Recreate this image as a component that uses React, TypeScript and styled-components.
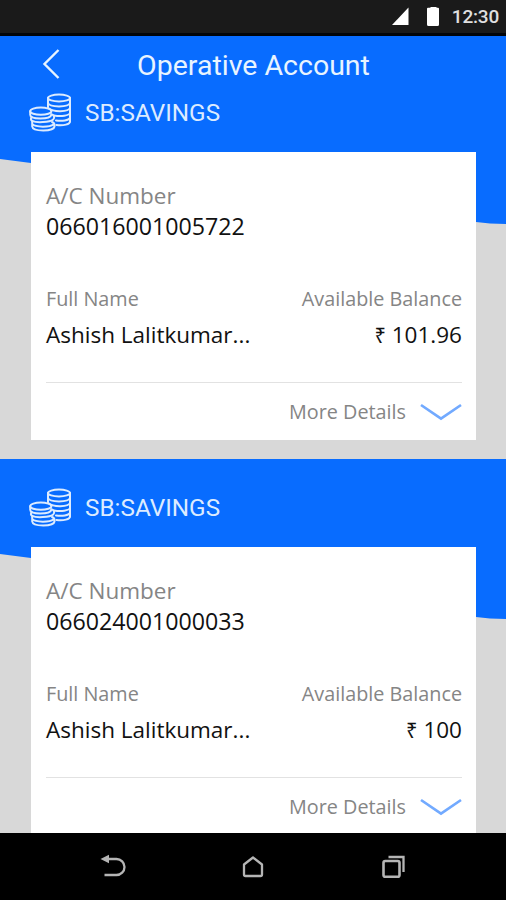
import React from "react";
import styled, { createGlobalStyle } from "styled-components";

const GlobalStyle = createGlobalStyle`
  * { box-sizing: border-box; }
  body { margin: 0; background: #000; }
`;

const Phone = styled.div`
  width: 506px;
  height: 900px;
  display: flex;
  flex-direction: column;
  overflow: hidden;
  background: #d8d8d8;
  font-family: "Open Sans", "Noto Sans", sans-serif;
`;

const StatusBar = styled.div`
  flex: none;
  height: 36px;
  display: flex;
  justify-content: flex-end;
  padding-right: 7px;
  background: #1a1a1a;
  border-bottom: 3px solid #020509;
`;

const StatusIcons = styled.svg`
  width: 54px;
  height: 33px;
  margin-right: 6px;
`;

const Clock = styled.span`
  color: #e0e0e0;
  font: 500 19px/33px Roboto, sans-serif;
  letter-spacing: -0.2px;
`;

const Content = styled.main`
  flex: 1;
  min-height: 0;
  overflow: hidden;
`;

const Account = styled.section<{ $gap: number; $left: number; $right: number }>`
  padding: 0 30px 0 31px;
  margin-bottom: ${(p) => p.$gap}px;
  background: #d8d8d8;
  position: relative;
  isolation: isolate;

  &::before {
    content: "";
    position: absolute;
    inset: 0;
    z-index: -1;
    background: #086cff;
    clip-path: polygon(
      0 0,
      100% 0,
      100% ${(p) => p.$right + 2}px,
      490px ${(p) => p.$right + 1.4}px,
      476px ${(p) => p.$right}px,
      31px ${(p) => p.$left + 4}px,
      0 ${(p) => p.$left}px
    );
  }
`;

const TitleBar = styled.header`
  height: 58px;
  display: grid;
  grid-template-columns: 44px 1fr 44px;
  color: #e8f4ff;
`;

const BackIcon = styled.svg`
  width: 32px;
  height: 44px;
  margin-top: 6px;
`;

const Title = styled.h1`
  margin: 0;
  text-align: center;
  font: 400 28.5px/60px Roboto, sans-serif;
  white-space: nowrap;
`;

const AccountHeading = styled.div<{ $top: number }>`
  display: flex;
  height: ${(p) => p.$top + 58}px;
  padding-top: ${(p) => p.$top}px;
  color: #dcebff;
`;

const Coins = styled.svg`
  width: 42px;
  height: 40px;
  margin: -1px 14px 0 -2px;
`;

const AccountType = styled.h2`
  margin: 0;
  font: 400 24.3px/38px Roboto, sans-serif;
`;

const Card = styled.article`
  height: 288px;
  padding: 30px 14px 0 15px;
  background: #fff;
`;

const Label = styled.div<{ $large?: boolean }>`
  color: #858585;
  font-size: ${(p) => (p.$large ? 22.5 : 19.8)}px;
  line-height: 28px;
  white-space: nowrap;
`;

const Value = styled.div<{ $large?: boolean }>`
  color: #111;
  font-size: ${(p) => (p.$large ? 23.2 : 22.5)}px;
  line-height: 32px;
  white-space: nowrap;
`;

const Rupee = styled.span`
  font-size: 20px;
`;

const Columns = styled.div`
  display: flex;
  justify-content: space-between;
  height: 98px;
  margin-top: 43px;
  border-bottom: 1px solid #e2e2e2;
`;

const Column = styled.div<{ $end?: boolean }>`
  display: flex;
  flex-direction: column;
  gap: 6px;
  text-align: ${(p) => (p.$end ? "right" : "left")};
`;

const MoreRow = styled.div`
  display: flex;
  justify-content: flex-end;
  align-items: center;
  height: 58px;
  gap: 14px;
`;

const Chevron = styled.svg`
  width: 43px;
  height: 20px;
  margin-right: -1px;
`;

const NavBar = styled.nav`
  flex: none;
  height: 67px;
  display: flex;
  justify-content: center;
  gap: 110px;
  padding-top: 19px;
  background: #000;
`;

const NavIcon = styled.svg`
  width: 30px;
  height: 30px;
  fill: none;
  stroke: #b5b5b5;
  stroke-width: 2.3;
`;

function CoinStacks() {
  return (
    <Coins viewBox="0 0 42 40" fill="none" stroke="currentColor" strokeWidth="2" strokeLinecap="round">
      <ellipse cx="30" cy="5" rx="11" ry="3.4" />
      <path d="M19 5V14.500M41 5V28.500" />
      <path d="M19 10c1.500 4.500 20.500 4.500 22 0M20 15.600c4 3.500 19.500 3.500 21-.6M25 22.400c7 1.200 15 .3 16-2.400M27 27.400c6 .8 13 0 14-2.400M27.500 32c7 .7 13.500-.5 13.500-3.500" />
      <ellipse cx="11.800" cy="18.200" rx="10.600" ry="3.600" />
      <path d="M1.200 18.200v3.600c0 5 20 5 21.200 0" />
      <path d="M3 24.200c-1.700 1-1.300 2.800.2 3.600 4 2.200 17.500 1.600 21-1.400 2-1.800.8-4.600-1.800-5.200" />
      <path d="M3.200 28v5.500c.5 5.300 21.500 5.300 22.300 0 .4-2.600-.6-4-2.500-4.500M3.400 31.200c3 3.300 17.500 3.200 21 .3" />
    </Coins>
  );
}

interface AccountData {
  number: string;
  name: string;
  balance: string;
}

function AccountDetails({ number, name, balance, top }: AccountData & { top: number }) {
  return (
    <>
      <AccountHeading $top={top}>
        <CoinStacks />
        <AccountType>SB:SAVINGS</AccountType>
      </AccountHeading>
      <Card>
        <Label $large>A/C Number</Label>
        <Value $large>{number}</Value>
        <Columns>
          <Column>
            <Label>Full Name</Label>
            <Value>{name}</Value>
          </Column>
          <Column $end>
            <Label>Available Balance</Label>
            <Value><Rupee>₹</Rupee> {balance}</Value>
          </Column>
        </Columns>
        <MoreRow>
          <Label>More Details</Label>
          <Chevron viewBox="0 0 43 20" fill="none" stroke="#72aaff" strokeWidth="2.7">
            <path d="M1 3 21 16.500 41 3" />
          </Chevron>
        </MoreRow>
      </Card>
    </>
  );
}

export default function App() {
  return (
    <Phone>
      <GlobalStyle />
      <StatusBar>
        <StatusIcons viewBox="0 0 54 33" fill="#fff">
          <path d="M0 25 16.500 7.500V25Z" />
          <path d="M36 7.800h2.500V7h6v.8H46q1 0 1 1v15.700q0 1.500-1.500 1.500h-9q-1.500 0-1.500-1.500v-15.700q0-1 1-1Z" />
        </StatusIcons>
        <Clock>12:30</Clock>
      </StatusBar>
      <Content>
        <Account $gap={19} $left={123} $right={186}>
          <TitleBar>
            <BackIcon viewBox="0 0 32 44" fill="none" stroke="currentColor" strokeWidth="2.400">
              <path d="M27.500 8 13.500 22 27.500 36" />
            </BackIcon>
            <Title>Operative Account</Title>
          </TitleBar>
          <AccountDetails top={0} number="066016001005722" name="Ashish Lalitkumar..." balance="101.96" />
        </Account>
        <Account $gap={0} $left={95} $right={158}>
          <AccountDetails top={30} number="066024001000033" name="Ashish Lalitkumar..." balance="100" />
        </Account>
      </Content>
      <NavBar>
        <NavIcon viewBox="0 0 30 30">
          <path d="M8 7h10.500a8 8 0 0 1 0 16H6.500" />
          <path d="M2.500 7 11 2.800V11.200Z" fill="#b5b5b5" stroke="none" />
        </NavIcon>
        <NavIcon viewBox="0 0 30 30">
          <path d="M6 12.500 15 5.500l9 7V22.500q0 1.500-1.500 1.500h-15Q6 24 6 22.500Z" strokeLinejoin="round" />
        </NavIcon>
        <NavIcon viewBox="0 0 30 30">
          <rect x="5.500" y="9" width="16" height="15.800" rx="1.800" strokeWidth="2.600" />
          <path d="M10.500 5h15V20" />
        </NavIcon>
      </NavBar>
    </Phone>
  );
}
